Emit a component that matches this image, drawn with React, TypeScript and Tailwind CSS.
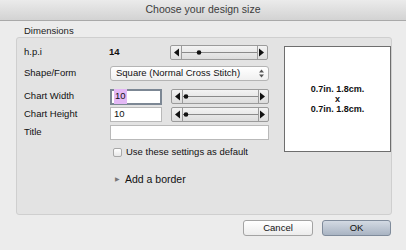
const Slider = ({ knob }: { knob: number }) => (
  <svg width="98" height="15" viewBox="0 0 98 15" className="block">
    <defs>
      <linearGradient id={`sg${knob}`} x1="0" y1="0" x2="0" y2="1">
        <stop offset="0" stopColor="#f4f4f4" />
        <stop offset="1" stopColor="#dcdcdc" />
      </linearGradient>
    </defs>
    <rect x="0.5" y="0.5" width="97" height="14" rx="1.5" fill={`url(#sg${knob})`} stroke="#9b9b9b" />
    <line x1="11.5" y1="1" x2="11.5" y2="14" stroke="#9b9b9b" />
    <line x1="87.5" y1="1" x2="87.5" y2="14" stroke="#9b9b9b" />
    <polygon points="4,7.5 9,3.5 9,11.5" fill="#111" />
    <polygon points="94,7.5 89,3.5 89,11.5" fill="#111" />
    <line x1="12" y1="7.5" x2="87" y2="7.5" stroke="#8a8a8a" />
    <circle cx={knob} cy="7.5" r="2.3" fill="#111" />
  </svg>
);

export default function App() {
  const font = { fontFamily: '"Liberation Sans", Arial, sans-serif' };
  return (
    <div
      className="w-[406px] h-[250px] bg-[#ececec] flex flex-col overflow-hidden text-[9.5px] text-[#111]"
      style={font}
    >
      <div className="h-[21px] shrink-0 flex items-center justify-center bg-gradient-to-b from-[#ebebeb] to-[#d3d3d3] border-b border-[#a9a9a9] text-[10.5px] text-[#3c3c3c]">
        Choose your design size
      </div>

      <div className="pl-[24px] pt-[5px] leading-none text-[#222]">Dimensions</div>

      <div className="ml-[16px] mt-[1px] w-[376px] h-[178px] bg-[#e3e3e3] border border-[#cfcfcf] rounded-[3px] flex pt-[7px] pl-[7px]">
        <div className="w-[253px] flex flex-col">
          <div className="h-[15px] flex items-center">
            <span className="w-[85px]">h.p.i</span>
            <span className="w-[61px] font-bold">14</span>
            <Slider knob={29} />
          </div>

          <div className="h-[16px] mt-[6px] flex items-center">
            <span className="w-[86px]">Shape/Form</span>
            <div className="w-[159px] h-[15px] bg-gradient-to-b from-[#ffffff] to-[#f0f0f0] border border-[#b4b4b4] rounded-[3px] flex items-center justify-between pl-[5px] pr-[4px]">
              <span>Square (Normal Cross Stitch)</span>
              <svg width="5" height="9" viewBox="0 0 5 9">
                <polygon points="2.5,0.5 5,3.5 0,3.5" fill="#555" />
                <polygon points="2.5,8.5 5,5.5 0,5.5" fill="#555" />
              </svg>
            </div>
          </div>

          <div className="h-[16px] mt-[7px] flex items-center">
            <span className="w-[86px]">Chart Width</span>
            <div className="w-[52px] h-[16px] bg-white border-2 border-[#7c8794] flex items-center pl-[2px]">
              <span className="bg-[#e3b8f5] px-[1px]">10</span>
            </div>
            <div className="ml-[9px]">
              <Slider knob={15} />
            </div>
          </div>

          <div className="h-[16px] mt-[2px] flex items-center">
            <span className="w-[86px]">Chart Height</span>
            <div className="w-[52px] h-[15px] bg-white border border-[#b9b9b9] flex items-center pl-[3px]">
              10
            </div>
            <div className="ml-[9px]">
              <Slider knob={15} />
            </div>
          </div>

          <div className="h-[16px] mt-[2px] flex items-center">
            <span className="w-[86px]">Title</span>
            <div className="w-[159px] h-[15px] bg-white border border-[#b9b9b9]" />
          </div>

          <div className="h-[12px] mt-[6px] flex items-center pl-[89px]">
            <span className="w-[9px] h-[9px] bg-gradient-to-b from-white to-[#e8e8e8] border border-[#a8a8a8] rounded-[2px] mr-[4px]" />
            <span>Use these settings as default</span>
          </div>

          <div className="h-[14px] mt-[14px] flex items-center pl-[91px]">
            <span className="text-[6px] text-[#777] mr-[5px]">▶</span>
            <span className="text-[10.5px]">Add a border</span>
          </div>
        </div>

        <div className="mt-[1px] ml-[7px] w-[107px] h-[106px] bg-white border border-[#6e6e6e] flex flex-col items-center justify-center font-bold text-[9px] leading-[10px]">
          <span>0.7in. 1.8cm.</span>
          <span>x</span>
          <span>0.7in. 1.8cm.</span>
        </div>
      </div>

      <div className="flex justify-end gap-[9px] pr-[15px] mt-[5px]">
        <button className="w-[70px] h-[16px] bg-gradient-to-b from-[#ffffff] to-[#ececec] border border-[#a3a3a3] rounded-[3px] text-[9.5px] leading-none">
          Cancel
        </button>
        <button className="w-[69px] h-[16px] bg-gradient-to-b from-[#d3dae3] to-[#a9b4c3] border border-[#7f8b9b] rounded-[3px] text-[9.5px] leading-none">
          OK
        </button>
      </div>
    </div>
  );
}
